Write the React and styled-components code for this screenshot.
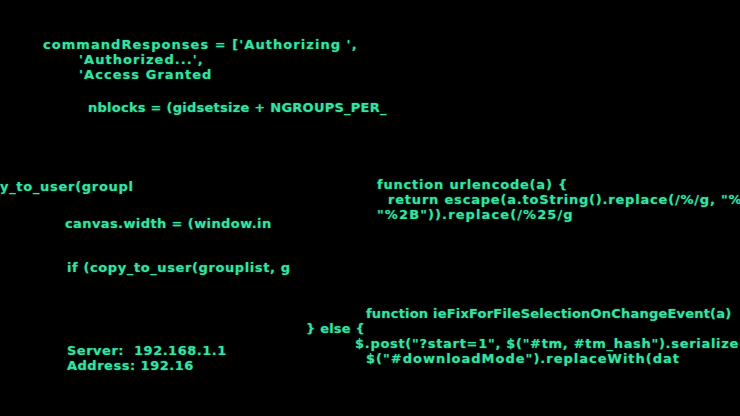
import React from 'react';
import styled, { createGlobalStyle } from 'styled-components';

const GlobalStyle = createGlobalStyle`
  html, body {
    margin: 0;
    padding: 0;
    background: #000;
  }
`;

const Screen = styled.div`
  position: relative;
  width: 740px;
  height: 416px;
  overflow: hidden;
  background: #000;
  color: #35e3a2;
  font-family: "DejaVu Sans", "Liberation Sans", sans-serif;
  font-weight: bold;
  text-shadow: 0 0 2px rgba(53, 227, 162, 0.45);
`;

// a fragment of code floating on the canvas
const Snippet = styled.div`
  position: absolute;
  left: ${p => p.x}px;
  top: ${p => p.y}px;
  font-size: 13px;
  line-height: 15px;
  white-space: pre;
`;

const Line = styled.div`
  padding-left: ${p => p.indent || 0}px;
  letter-spacing: ${p => p.spacing}px;
`;

// [text, indent, letter-spacing]
const snippets = [
  {
    x: 43, y: 37,
    lines: [
      ['commandResponses = [\'Authorizing \',', 0, 1.05],
      ['\'Authorized...\',', 36, 1.05],
      ['\'Access Granted', 36, 1.05],
    ],
  },
  { x: 88, y: 100, lines: [['nblocks = (gidsetsize + NGROUPS_PER_', 0, 0.25]] },
  { x: 0, y: 179, lines: [['y_to_user(groupl', 0, 0.7]] },
  { x: 65, y: 216, lines: [['canvas.width = (window.in', 0, 0.4]] },
  { x: 67, y: 260, lines: [['if (copy_to_user(grouplist, g', 0, 0.6]] },
  {
    x: 377, y: 177,
    lines: [
      ['function urlencode(a) {', 0, 0.8],
      ['return escape(a.toString().replace(/%/g, "%25")', 11, 0.8],
      ['"%2B")).replace(/%25/g', 0, 1.1],
    ],
  },
  {
    x: 306, y: 306,
    lines: [
      ['function ieFixForFileSelectionOnChangeEvent(a)', 60, 0.2],
      ['} else {', 0, 0.2],
      ['$.post("?start=1", $("#tm, #tm_hash").serialize()', 49, 0.7],
      ['$("#downloadMode").replaceWith(dat', 60, 1.0],
    ],
  },
  {
    x: 67, y: 343,
    lines: [
      ['Server:  192.168.1.1', 0, 0.5],
      ['Address: 192.16', 0, 0.5],
    ],
  },
];

const App = () => {
  return (
    <Screen>
      <GlobalStyle />
      {snippets.map((s, i) => (
        <Snippet key={i} x={s.x} y={s.y}>
          {s.lines.map(([text, indent, spacing], j) => (
            <Line key={j} indent={indent} spacing={spacing}>{text}</Line>
          ))}
        </Snippet>
      ))}
    </Screen>
  );
};

export default App;
